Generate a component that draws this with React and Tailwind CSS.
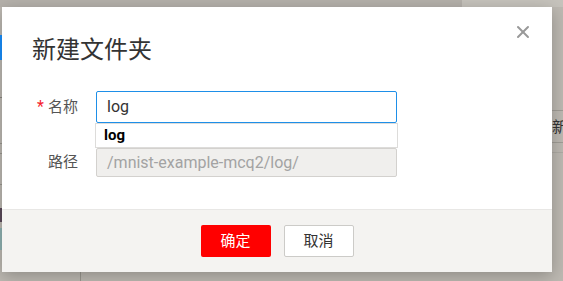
import { X } from "lucide-react";

const FONT = { fontFamily: 'Roboto, "Noto Sans CJK SC", sans-serif' };

export default function App() {
  return (
    <div className="relative h-[281px] w-[563px] overflow-hidden bg-[#bdb9b2]" style={FONT}>
      {/* page behind the overlay */}
      <div className="flex h-[7px] w-full">
        <div className="h-full w-[462px] bg-[#b5b1ab]" />
        <div className="h-full flex-1 bg-[#c6c3bc]" />
      </div>
      <div className="absolute left-0 top-[35px] h-[25px] w-[4px] bg-[#1890ff]" />
      <div className="absolute left-0 top-[97px] h-px w-[4px] bg-[#8a8780]" />
      <div className="absolute left-0 top-[143px] h-px w-[4px] bg-[#9a978f]" />
      <div className="absolute left-0 top-[153px] h-px w-[4px] bg-[#9a978f]" />
      <div className="absolute left-0 top-[184px] h-px w-[4px] bg-[#9a978f]" />
      <div className="absolute left-0 top-[208px] h-[14px] w-[3px] bg-[#5a4a5a]" />
      <div className="absolute left-0 top-[228px] h-[22px] w-[3px] bg-[#8fb2b2]" />
      <div className="absolute left-[80px] top-[272px] h-[9px] w-px bg-[#9a978f]" />
      <div className="absolute left-[552px] top-[110px] h-px w-[11px] bg-[#a09d96]" />
      <div className="absolute left-[552px] top-[142px] h-px w-[11px] bg-[#a09d96]" />
      <div className="absolute left-[552px] top-[152px] h-px w-[11px] bg-[#aeaba4]" />
      <div className="absolute left-[552px] top-[118px] text-[15px] leading-[18px] text-[#333]">新</div>

      {/* modal */}
      <div className="absolute left-[2px] top-[7px] flex h-[265px] w-[550px] flex-col bg-white shadow-[0_4px_16px_rgba(0,0,0,0.25)]">
        <button className="absolute right-[19px] top-[15px] flex h-[20px] w-[20px] items-center justify-center text-[#999]">
          <X size={20} strokeWidth={2.4} />
        </button>

        <div className="pl-[30px] pt-[28px] text-[24px] leading-[30px] text-[#333]">新建文件夹</div>

        <div className="flex flex-1 flex-col gap-[25px] pt-[26px]">
          <div className="flex items-center">
            <div className="flex w-[76px] items-center justify-end gap-[4px] text-[15px] text-[#555]">
              <span className="text-[16px] leading-[16px] text-[#f5222d]">*</span>
              <span>名称</span>
            </div>
            <div className="relative ml-[18px] w-[301px]">
              <div className="flex h-[32px] items-center rounded-[2px] border border-[#1e8fe8] bg-white px-[10px] text-[16px] text-[#333]">
                log
              </div>
              <div className="absolute left-[-1px] top-[32px] z-10 flex h-[25px] w-[303px] items-center border border-[#dddcda] bg-white px-[8px] text-[15px] font-bold text-black">
                log
              </div>
            </div>
          </div>

          <div className="flex items-center">
            <div className="flex w-[76px] justify-end text-[15px] text-[#555]">路径</div>
            <div className="ml-[18px] flex h-[29px] w-[301px] items-center rounded-[2px] border border-[#d3d1ce] bg-[#f0efed] px-[10px] text-[16px] text-[#a3a3a3]">
              /mnist-example-mcq2/log/
            </div>
          </div>
        </div>

        <div className="flex h-[63px] items-center justify-center gap-[13px] border-t border-[#e8e7e5] bg-[#f4f3f1]">
          <button className="h-[32px] w-[70px] rounded-[2px] bg-[#ff0000] text-[15px] text-white">确定</button>
          <button className="h-[32px] w-[70px] rounded-[2px] border border-[#cccbc8] bg-white text-[15px] text-[#333]">
            取消
          </button>
        </div>
      </div>
    </div>
  );
}
